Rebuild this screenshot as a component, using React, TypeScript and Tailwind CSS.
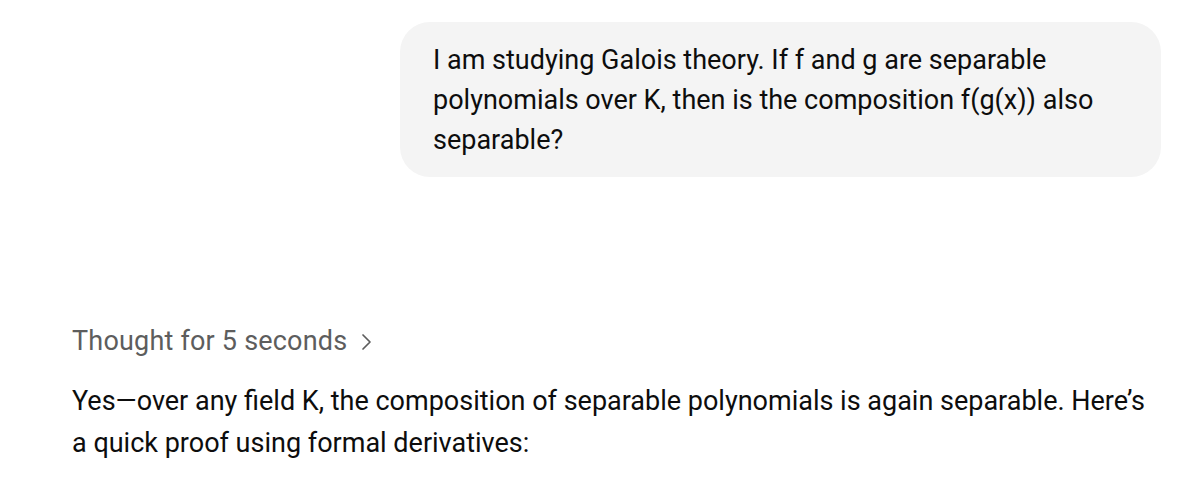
export default function App() {
  return (
    <div
      className="flex h-[479px] w-[1200px] flex-col overflow-hidden bg-white pt-[22px] text-[27px] text-[#0d0d0d]"
      style={{ fontFamily: 'Roboto, "Liberation Sans", sans-serif' }}
    >
      <div className="flex justify-end pr-[39px]">
        <div className="w-[761px] rounded-[30px] bg-[#f4f4f4] pb-[17px] pl-[33px] pr-[33px] pt-[18px] leading-[40px]">
          I am studying Galois theory. If f and g are separable polynomials over K, then is the composition f(g(x)) also
          separable?
        </div>
      </div>

      <div className="mt-[144px] flex items-center gap-[13px] pl-[72px] leading-[40px] tracking-[0.2px] text-[#5d5d5d]">
        <span>Thought for 5 seconds</span>
        <svg width="12" height="20" viewBox="0 0 12 20" fill="none" className="mt-[2px]">
          <path d="M3 3l7 7-7 7" stroke="#5d5d5d" strokeWidth="1.7" strokeLinecap="round" strokeLinejoin="round" />
        </svg>
      </div>

      <p className="mt-[19px] pl-[72px] pr-[39px] leading-[42px]">
        Yes—over any field K, the composition of separable polynomials is again separable. Here’s a quick proof using
        formal derivatives:
      </p>
    </div>
  );
}
